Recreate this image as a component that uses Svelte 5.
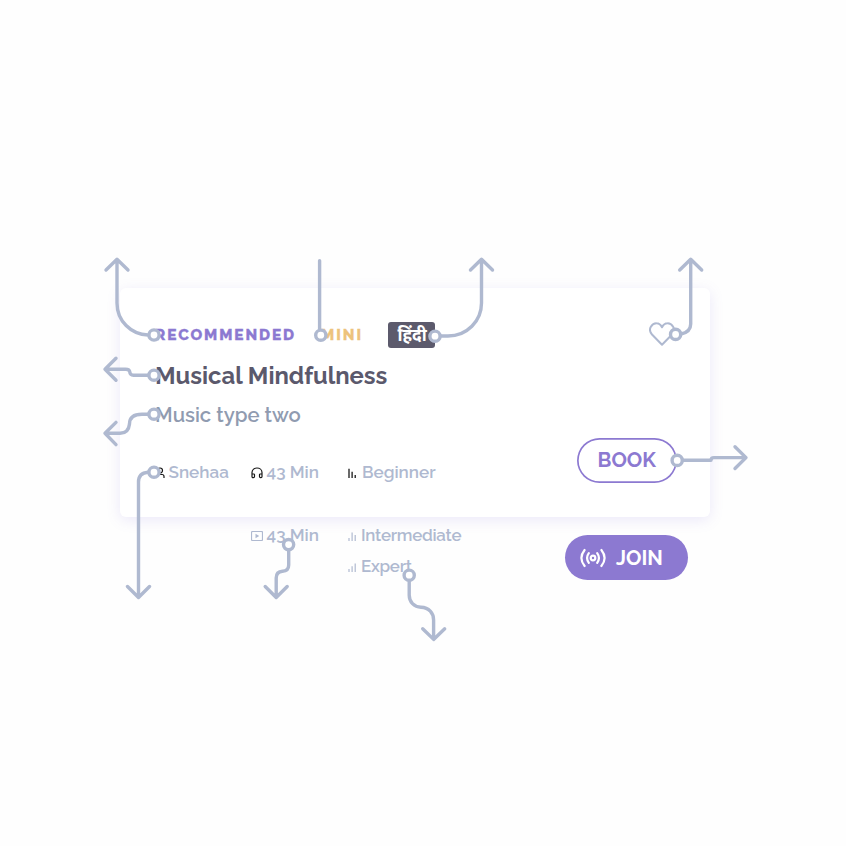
<script>
  const rings = [
    [154, 335], [154, 375.2], [154, 414.2], [154, 472.2], [320.8, 335.2],
    [435, 336.2], [675.6, 334.4], [677.2, 460.4], [288.6, 544.6], [409.2, 575.2]
  ];
  const arrows = [
    'M148 335C131 334.5 117 321 117 303V260M106 270L117 259.3L128 270',
    'M148 375.2H133.5Q130 375.2 129.8 372Q129.5 369.2 125.5 369.2H105M116 358.3L105 369.2L116 380.3',
    'M148 414.2H142Q129.5 414.2 129.5 424Q128.5 433.3 120 433.3H105M116 422.4L105 433.3L116 444.6',
    'M148 472.2Q138.5 473 138.5 482V597M127.5 586.5L138.5 597.5L149.5 586.5',
    'M319.6 260.7V329',
    'M441 336H448C467 336 481.5 321 481.5 303V260M470.5 270L481.5 259.3L492.5 270',
    'M681 334Q690.7 332 690.7 324V260M679.7 270L690.7 259.3L701.7 270',
    'M683 460.3H711Q711 457.6 714 457.6H746M735 446.8L746 457.6L735 468.5',
    'M288.7 550.5V565Q288.7 571 282.5 571.2Q276.2 571.5 276.2 578V597M265.2 586.5L276.2 597.5L287.2 586.5',
    'M409.2 581V595C409.2 602 414 607 421 607.2C429 607.4 433.6 613 433.6 620V639M422.7 628.8L433.6 639.4L444.7 628.8'
  ];
</script>

{#snippet bars(heights)}
  <svg class="bars" width="9" height="10" viewBox="0 0 9 10" fill="none" stroke="currentColor" stroke-width="1.2">
    {#each heights as h, i}
      <path d="M{1 + i * 3.1} 10v-{h}" />
    {/each}
  </svg>
{/snippet}

<main>
  <section class="card">
    <header>
      <span class="rec">RECOMMENDED</span>
      <span class="mini">MINI</span>
      <span class="lang">हिंदी</span>
      <svg class="heart" width="26" height="25" viewBox="0 0 26 25" fill="none" stroke="#afb9d0" stroke-width="2" stroke-linejoin="round">
        <path d="M13 22.8L3 12.5C-2 6.8 3.5 1.2 7.5 1.3C10.5 1.3 12 3.3 13 5.3C14 3.3 15.5 1.3 18.5 1.3C22.5 1.2 28 6.8 23 12.5Z" />
      </svg>
    </header>
    <h1>Musical Mindfulness</h1>
    <h2>Music type two</h2>
    <div class="meta">
      <span class="item who">
        <svg width="10" height="12" viewBox="0 0 10 12" fill="none" stroke="#171717" stroke-width="1.2">
          <circle cx="5" cy="3.5" r="2.5" /><path d="M1 11V9.5Q1 7.5 3 7.5H7Q9 7.5 9 9.5V11" />
        </svg>
        <span>Snehaa</span>
      </span>
      <span class="item">
        <svg width="12" height="12" viewBox="0 0 12 12" fill="none" stroke="#171717" stroke-width="1.2">
          <path d="M1 9V5.5C1 -.5 11 -.5 11 5.5V9M1 7H2.7Q3.5 7 3.5 7.8V9.6Q3.5 10.7 2.4 10.7H2Q1 10.7 1 9.5ZM11 7H9.3Q8.5 7 8.5 7.8V9.6Q8.5 10.7 9.6 10.7H10Q11 10.7 11 9.5Z" />
        </svg>
        <span>43 Min</span>
      </span>
      <span class="item level dark">{@render bars([9.2, 6.2, 3])}<span>Beginner</span></span>
    </div>
    <button class="book">BOOK</button>
  </section>

  <section class="variants">
    <div class="meta">
      <span></span>
      <span class="item">
        <svg width="12" height="10" viewBox="0 0 12 10" fill="none" stroke="#afb9d0" stroke-width="1.2">
          <rect x=".5" y=".5" width="11" height="9" rx="1" /><path d="M4.5 2.7V7.3L8.2 5Z" fill="#afb9d0" stroke="none" />
        </svg>
        <span>43 Min</span>
      </span>
      <span class="item level">{@render bars([3, 8.5, 6])}<span class="other">Intermediate</span></span>
      <span></span>
      <span></span>
      <span class="item level">{@render bars([3, 5.8, 8.5])}<span class="other">Expert</span></span>
    </div>
    <button class="join">
      <svg width="26" height="20" viewBox="0 0 26 20" fill="none" stroke="#fff" stroke-width="2.2" stroke-linecap="round">
        <circle cx="13" cy="10" r="2.3" />
        <path d="M8.8 5.2Q5.3 10 8.8 14.8M17.2 5.2Q20.7 10 17.2 14.8M4.6 2Q-1.8 10 4.6 18M21.4 2Q27.8 10 21.4 18" />
      </svg>
      <span>JOIN</span>
    </button>
  </section>

  <svg class="callouts" width="846" height="846" viewBox="0 0 846 846" fill="none" stroke="#afb9d0" stroke-width="3.4" stroke-linecap="round" stroke-linejoin="round">
    {#each arrows as d}<path {d} />{/each}
    {#each rings as [cx, cy]}<circle {cx} {cy} r="5.1" fill="#fff" />{/each}
  </svg>
</main>

<style>
  :global(body) { background: #fefefe; }
  main {
    position: relative;
    box-sizing: border-box;
    width: 846px;
    height: 846px;
    padding: 288px 0 0 120px;
    overflow: hidden;
    background: #fefefe;
    font-family: Raleway, Lato, "Noto Sans", sans-serif;
    color: #afb9d0;
  }
  .card {
    box-sizing: border-box;
    width: 589.5px;
    height: 228.5px;
    padding: 34px 32.5px 0 35px;
    border-radius: 6px;
    background: #fff;
    box-shadow: 0 3px 14px rgba(125, 105, 220, .15);
    display: flex;
    flex-direction: column;
  }
  header { display: flex; align-items: center; height: 26px; font-size: 15.4px; font-weight: 800; }
  .rec { width: 166px; color: #8c79d1; letter-spacing: 1.9px; }
  .mini { width: 66.5px; color: #edc37c; letter-spacing: 2px; }
  .rec, .mini { margin-top: -1px; -webkit-text-stroke: .3px currentColor; }
  .lang {
    box-sizing: border-box; width: 47.5px; height: 26px; padding-left: 10px; border-radius: 3px;
    background: #5c5a6c; color: #fff; font: 700 17px/25px "Noto Sans", sans-serif;
  }
  .heart { margin: -1px 2px 0 auto; }
  h1 { margin: 13px 0 0; font-size: 23.8px; line-height: 30px; font-weight: 700; color: #5b596c; white-space: nowrap; }
  h2 { margin: 12px 0 0; font-size: 20.3px; line-height: 24px; font-weight: 600; color: #909bb0; white-space: nowrap; }
  .meta {
    display: grid; grid-template-columns: 96px 97px 150px; grid-auto-rows: 31px;
    font-size: 17.1px; font-weight: 600; white-space: nowrap;
  }
  .card .meta { margin-top: 29px; }
  .item { display: flex; align-items: center; gap: 3.5px; }
  .item svg { flex: none; margin-top: 2px; }
  .level { gap: 4px; }
  .dark { gap: 5px; }
  .dark .bars { color: #050505; }
  .other { font-size: 16.9px; letter-spacing: -.25px; }
  button { font: 700 20.4px/26px Raleway, Lato, sans-serif; box-sizing: border-box; padding: 0; border: 0; }
  .book {
    align-self: flex-end; width: 100.5px; height: 44.5px; margin-top: -49px; border-radius: 23px;
    background: #fff; color: #8c79d1; box-shadow: inset 0 0 0 1.7px #8c79d1;
  }
  .variants { display: flex; justify-content: space-between; width: 568px; padding: 2.5px 0 0 35px; box-sizing: border-box; }
  .join {
    display: flex; align-items: center; gap: 10px; width: 123px; height: 45px; margin-top: 16.3px; padding-left: 15px;
    border-radius: 23px; background: #8c79d1; color: #fff;
  }
  .callouts { position: absolute; left: 0; top: 0; }
</style>
